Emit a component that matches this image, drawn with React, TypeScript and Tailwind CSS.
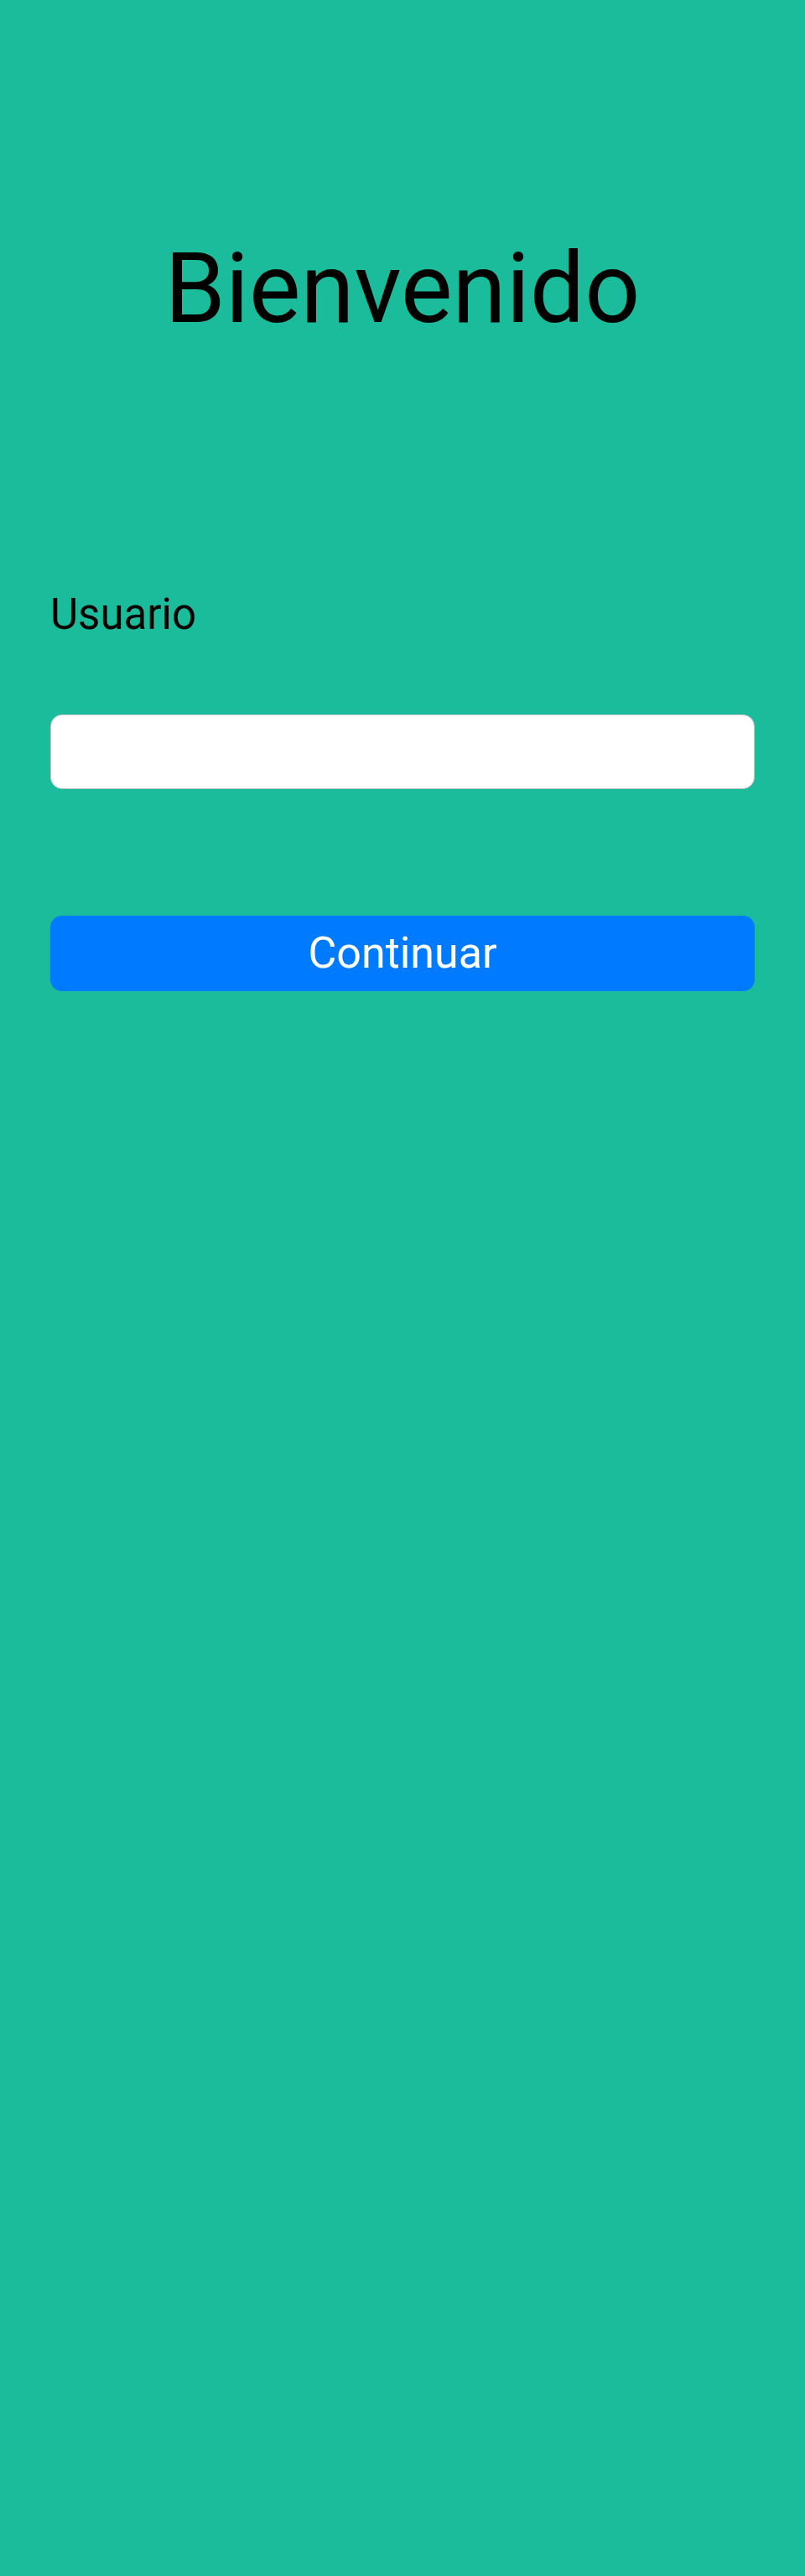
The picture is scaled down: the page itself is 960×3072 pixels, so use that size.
export default function App() {
  return (
    <div className="min-h-[3072px] w-full bg-[#1abc9c] font-['Roboto',sans-serif]">
      <div className="flex flex-col px-[60px] pt-[286px]">
        <h1 className="text-center text-[116px] leading-none font-normal text-black">Bienvenido</h1>

        <label className="mt-[305px] text-[51px] leading-none text-black">Usuario</label>
        <input
          type="text"
          className="mt-[94px] h-[89px] w-full rounded-[14px] border border-[#c4c4c4] bg-white px-4 text-[40px] outline-none"
        />

        <button className="mt-[151px] flex h-[90px] w-full items-center justify-center rounded-[14px] bg-[#007aff] text-[52px] leading-none text-white">
          Continuar
        </button>
      </div>
    </div>
  );
}
